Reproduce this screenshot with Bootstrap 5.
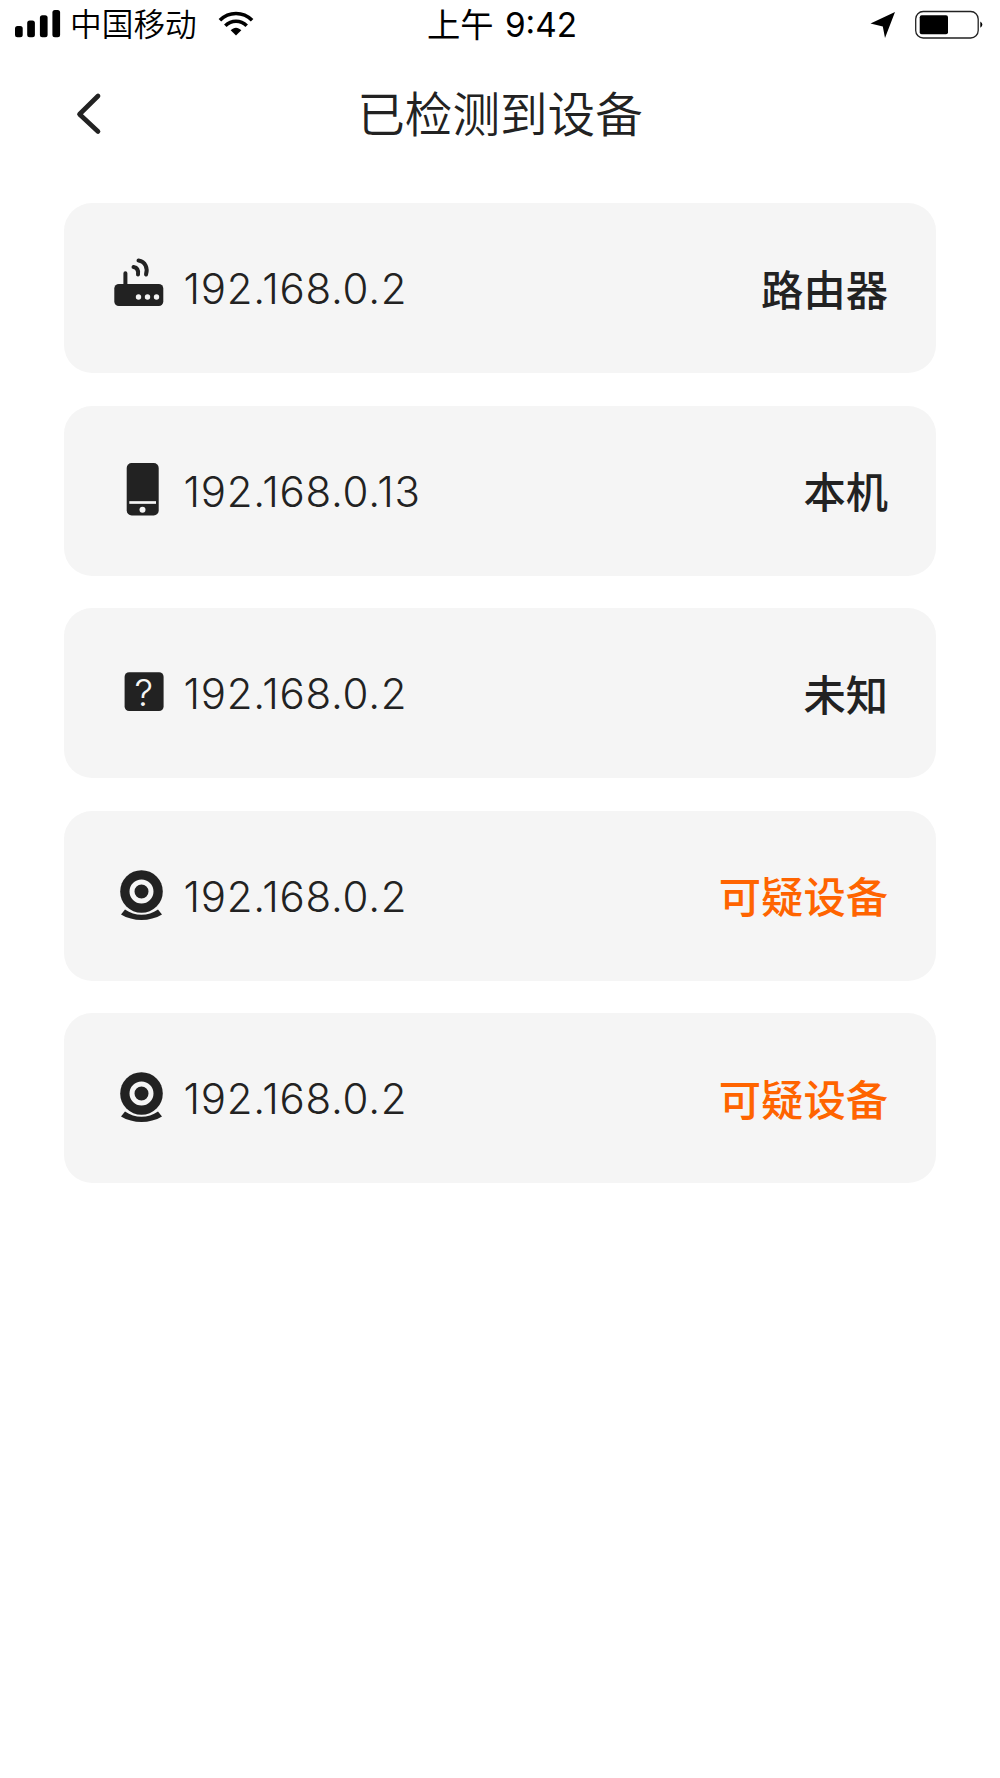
<!DOCTYPE html>
<html lang="zh-CN">
<head>
<meta charset="utf-8">
<meta name="viewport" content="width=device-width, initial-scale=1">
<title>已检测到设备</title>
<link href="https://cdn.jsdelivr.net/npm/bootstrap@5.3.0/dist/css/bootstrap.min.css" rel="stylesheet">
<style>
body{font-family:Inter,"Noto Sans CJK SC",sans-serif;color:#222;background:#fff}
svg{display:block;overflow:visible;flex-shrink:0}
.status-bar{height:48px;color:#000;padding:0 17px 0 15px;display:grid;grid-template-columns:1fr auto 1fr;grid-template-rows:48px}
.carrier{font-size:31.7px;font-weight:350;line-height:46px;margin-left:9px;padding-top:2px}
.wifi{margin-left:22px}
.clock{font-size:33.3px;line-height:46px;white-space:pre;word-spacing:2px;padding-left:6px;padding-top:1px}
.title-bar{height:133px;padding:0 64px;display:grid;grid-template-columns:48px 1fr 48px}
.page-title{font-size:47.6px;font-weight:350;line-height:60px;padding-top:1px}
.device-list{padding:22px 64px 0;gap:32.6px}
.device{height:170px;border-radius:28px;background:#f5f5f5;padding:0 48px 0 46px}
.ip{font-size:42px;font-weight:300;line-height:60px;margin-left:13.5px;padding-top:2px;letter-spacing:.75px}
.kind{font-size:42.3px;font-weight:500;line-height:60px;padding-top:5px}
.suspect{color:#ff6400}
</style>
</head>
<body>
<svg width="0" height="0" class="position-absolute" aria-hidden="true">
<symbol id="camera" viewBox="0 0 60 60"><circle cx="31.5" cy="25.5" r="21.300" fill="#222"/><circle cx="31.500" cy="25.500" r="9.500" fill="none" stroke="#f5f5f5" stroke-width="5"/><path d="M15 43.500C25 50.500 38 50.500 48 43.500L52 48.500C40 55.800 23 55.800 11 48.500Z" fill="#222"/></symbol>
</svg>
<header class="status-bar align-items-center">
  <div class="d-flex align-items-center">
    <svg width="46" height="48"><rect y="26" width="7.700" height="11.300" rx="2.500"/><rect x="12.200" y="20.500" width="7.700" height="16.800" rx="2.500"/><rect x="24.900" y="15.300" width="7.700" height="22" rx="2.500"/><rect x="37.400" y="10" width="7.700" height="27.300" rx="2.500"/></svg>
    <span class="carrier">中国移动</span>
    <svg class="wifi" width="34" height="48" fill="none" stroke="#000" stroke-width="3.600"><path d="M.9 20.300C10 11.300 24 11.300 33.100 20.300M6.300 25.700C12.500 19.700 21.500 19.700 27.700 25.700"/><path d="M11.700 30.200C15 26.800 19 26.800 22.300 30.200L17 35.500Z" fill="#000" stroke="none"/></svg>
  </div>
  <div class="clock">上午 9:42</div>
  <div class="d-flex justify-content-end align-items-center">
    <svg width="25" height="48"><path d="M23 12L13 38L10.800 26.500L-1.500 23.500Z"/></svg>
    <svg class="ms-3" width="70" height="48"><rect x="2.700" y="11.500" width="62.500" height="26.500" rx="7.500" fill="none" stroke="#222" stroke-width="1.300"/><rect x="6.700" y="15.300" width="28.300" height="19" rx="2"/><path d="M67.300 21.500Q71.500 24.500 67.300 27.800Z"/></svg>
  </div>
</header>
<nav class="title-bar align-items-center">
  <a href="#" aria-label="返回"><svg width="48" height="60" fill="none" stroke="#222" stroke-width="4.700" stroke-linecap="round" stroke-linejoin="round"><path d="M34 11L15.500 29.200L34 46.500"/></svg></a>
  <h1 class="page-title text-center mb-0">已检测到设备</h1>
</nav>
<main class="device-list d-flex flex-column">
  <div class="device d-flex align-items-center">
    <svg width="60" height="60"><rect x="4.300" y="26" width="49" height="22" rx="4.500" fill="#222"/><path d="M15.400 28V15.200M23.500 9Q29 10 28 16.500M28.500 2.500C35.500 3.500 38 10.500 36 16.500" fill="none" stroke="#222" stroke-width="4" stroke-linecap="round"/><g fill="#f5f5f5"><circle cx="28.500" cy="39" r="2.700"/><circle cx="37.500" cy="39" r="2.700"/><circle cx="46.500" cy="39" r="2.700"/></g></svg>
    <span class="ip">192.168.0.2</span><span class="kind ms-auto">路由器</span>
  </div>
  <div class="device d-flex align-items-center">
    <svg width="60" height="60"><rect x="16.700" y="2" width="32" height="52.500" rx="5" fill="#222"/><path d="M19.300 41.500H46" stroke="#f5f5f5" stroke-width="2.700"/><circle cx="32.500" cy="48.800" r="3" fill="#f5f5f5"/></svg>
    <span class="ip">192.168.0.13</span><span class="kind ms-auto">本机</span>
  </div>
  <div class="device d-flex align-items-center">
    <svg width="60" height="60"><rect x="14.600" y="9.300" width="39" height="38.800" rx="4.500" fill="#222"/><text x="33.800" y="42.500" text-anchor="middle" font-size="37" font-weight="350" fill="#f5f5f5">?</text></svg>
    <span class="ip">192.168.0.2</span><span class="kind ms-auto">未知</span>
  </div>
  <div class="device d-flex align-items-center">
    <svg width="60" height="60"><use href="#camera"/></svg>
    <span class="ip">192.168.0.2</span><span class="kind suspect ms-auto">可疑设备</span>
  </div>
  <div class="device d-flex align-items-center">
    <svg width="60" height="60"><use href="#camera"/></svg>
    <span class="ip">192.168.0.2</span><span class="kind suspect ms-auto">可疑设备</span>
  </div>
</main>
<script src="https://cdn.jsdelivr.net/npm/bootstrap@5.3.0/dist/js/bootstrap.bundle.min.js"></script>
</body>
</html>
